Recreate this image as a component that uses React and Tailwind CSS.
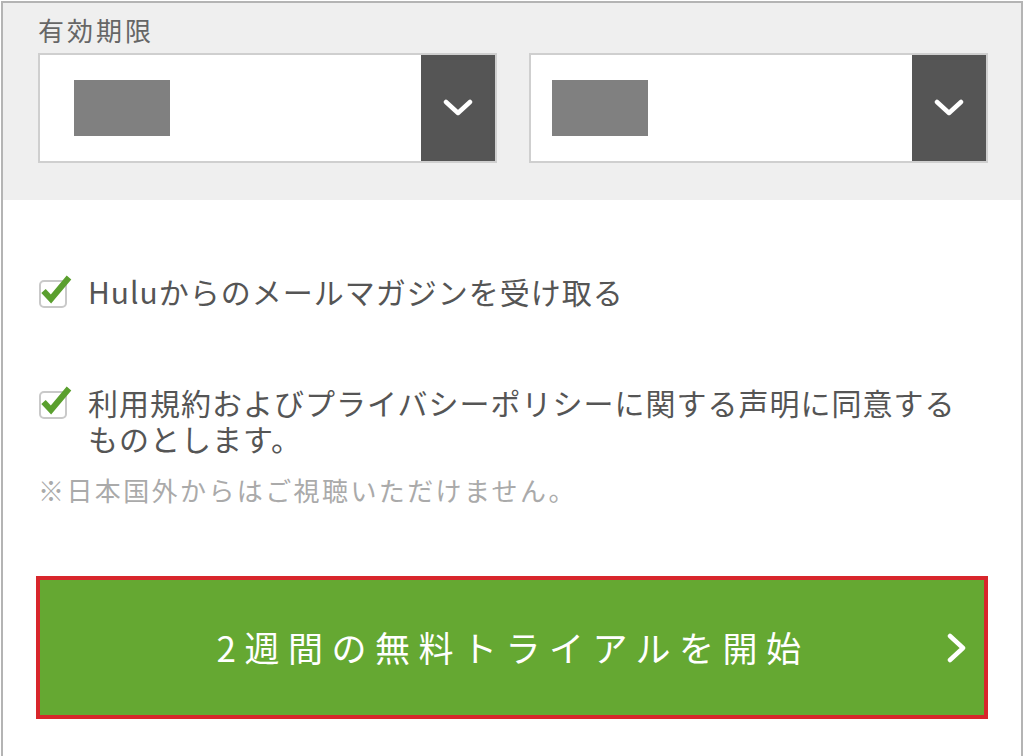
import React from "react";

const font = { fontFamily: '"Noto Sans CJK JP", "Noto Sans", sans-serif' };

function Chevron() {
  return (
    <svg width="30" height="18" viewBox="0 0 30 18" fill="none">
      <path d="M3 3 L15 14 L27 3" stroke="#fff" strokeWidth="4.5" strokeLinecap="round" strokeLinejoin="round" />
    </svg>
  );
}

function Select({ inset }) {
  return (
    <div className="flex h-[110px] w-[459px] border-2 border-[#cfcfcf] bg-white">
      <div className="flex flex-1 items-center">
        <div className={`h-[56px] w-[96px] bg-[#808080] ${inset}`} />
      </div>
      <div className="flex w-[74px] items-center justify-center bg-[#555555]">
        <Chevron />
      </div>
    </div>
  );
}

function Check() {
  return (
    <svg width="36" height="36" viewBox="0 0 36 36" className="shrink-0">
      <rect x="2" y="8" width="26" height="26" rx="4" fill="#fff" stroke="#c9c9c9" strokeWidth="2" />
      <path d="M5.5 18 L13 26 L31 4.5" fill="none" stroke="#5a9f2e" strokeWidth="6" strokeLinejoin="miter" />
    </svg>
  );
}

export default function App() {
  return (
    <div className="h-[756px] w-[1024px] overflow-hidden bg-white pl-px pt-px" style={font}>
      <div className="h-[800px] w-[1022px] border-l-2 border-r-2 border-t-2 border-[#b4b4b4]">
        <div className="bg-[#efefef] pb-[37px] pl-[35px] pt-[12px]">
          <div className="h-[30px] text-[26px] leading-[30px] tracking-[3px] text-[#666666]">有効期限</div>
          <div className="mt-[8px] flex gap-[32px]">
            <Select inset="ml-[34px]" />
            <Select inset="ml-[21px]" />
          </div>
        </div>

        <div className="pl-[33px]">
          <div className="ml-[2px] mt-[73px] flex items-start gap-[14px]">
            <Check />
            <div className="text-[30px] leading-[36px] tracking-[1px] text-[#555555]">
              Huluからのメールマガジンを受け取る
            </div>
          </div>

          <div className="ml-[2px] mt-[75px] flex items-start gap-[14px]">
            <Check />
            <div className="w-[890px] text-[30px] leading-[36px] tracking-[1px] text-[#555555]">
              利用規約およびプライバシーポリシーに関する声明に同意するものとします。
            </div>
          </div>

          <div className="ml-[2px] mt-[17px] text-[26px] leading-[34px] tracking-[2.4px] text-[#aaaaaa]">
            ※日本国外からはご視聴いただけません。
          </div>

          <div className="mt-[69px] grid h-[143px] w-[952px] grid-cols-[1fr_auto_1fr] items-center border-4 border-[#d8262b] bg-[#65a832]">
            <div />
            <div className="pl-[2px] text-[35px] tracking-[8.5px] text-white">2週間の無料トライアルを開始</div>
            <div className="flex justify-end pr-[15px]">
              <svg width="24" height="30" viewBox="0 0 24 30" fill="none">
                <path d="M5 3 L18 15 L5 27" stroke="#fff" strokeWidth="4.5" strokeLinecap="round" strokeLinejoin="round" />
              </svg>
            </div>
          </div>
        </div>
      </div>
    </div>
  );
}
